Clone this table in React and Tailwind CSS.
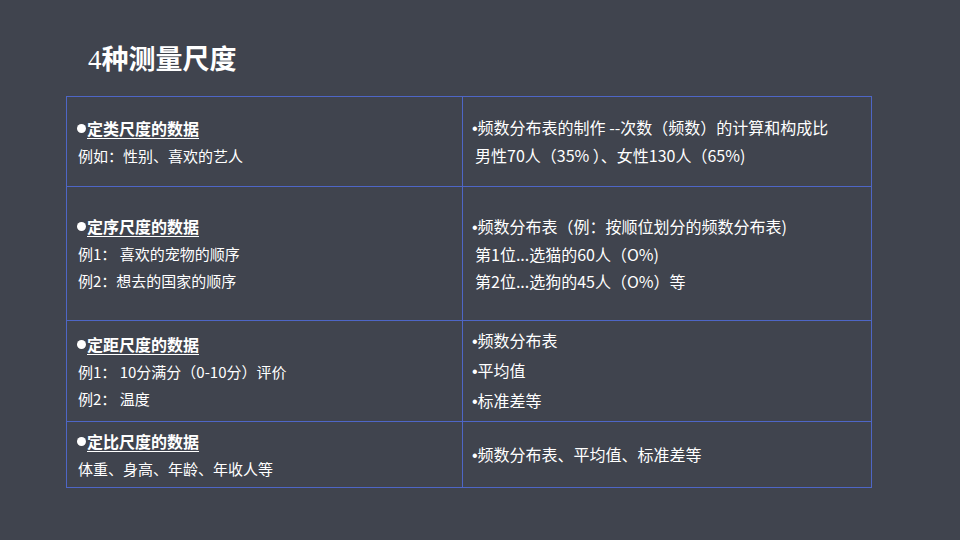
import React from "react";

const rows = [
  {
    h: "h-[90px]",
    title: "定类尺度的数据",
    left: ["例如：性别、喜欢的艺人"],
    right: ["频数分布表的制作 --次数（频数）的计算和构成比", "男性70人（35% ）、女性130人（65%)"],
    dots: [true, false],
    lead: "leading-[27px]",
  },
  {
    h: "h-[134px]",
    title: "定序尺度的数据",
    left: ["例1： 喜欢的宠物的顺序", "例2：想去的国家的顺序"],
    right: ["频数分布表（例：按顺位划分的频数分布表)", "第1位...选猫的60人（O%)", "第2位...选狗的45人（O%）等"],
    dots: [true, false, false],
    lead: "leading-[27px]",
  },
  {
    h: "h-[101px]",
    title: "定距尺度的数据",
    left: ["例1： 10分满分（0-10分）评价", "例2： 温度"],
    right: ["频数分布表", "平均值", "标准差等"],
    dots: [true, true, true],
    lead: "leading-[28px]",
  },
  {
    h: "h-[66px]",
    title: "定比尺度的数据",
    left: ["体重、身高、年龄、年收人等"],
    right: ["频数分布表、平均值、标准差等"],
    dots: [true],
    lead: "leading-[27px]",
  },
];

export default function App() {
  return (
    <div className="w-[960px] h-[540px] bg-[#40444e] text-white font-['Noto_Sans_CJK_SC',sans-serif] overflow-hidden">
      <div className="h-[96px] pl-[88px] pt-[40px]">
        <h1 className="text-[27px] leading-[36px] font-bold">
          <span className="font-['Liberation_Serif',serif] font-normal">4</span>种测量尺度
        </h1>
      </div>
      <table className="ml-[66px] w-[805px] border-collapse table-fixed">
        <colgroup>
          <col className="w-[396px]" />
          <col className="w-[409px]" />
        </colgroup>
        <tbody>
          {rows.map((r) => (
            <tr key={r.title} className={r.h}>
              <td className="border border-[#4e66c6] pl-[10px] align-middle">
                <div className="flex items-center text-[16px] leading-[27px] font-bold">
                  <span className="inline-block w-[9px] h-[9px] rounded-full bg-white mr-[1px]" />
                  <span className="underline underline-offset-[3px]">{r.title}</span>
                </div>
                {r.left.map((t) => (
                  <div key={t} className="text-[15px] leading-[27px] pl-[1px]">
                    {t}
                  </div>
                ))}
              </td>
              <td className="border border-[#4e66c6] pl-[9px] align-middle">
                {r.right.map((t, i) => (
                  <div key={t} className={`text-[16px] ${r.lead} ${r.dots[i] ? "" : "pl-[3px]"}`}>
                    {r.dots[i] && <span className="font-['Liberation_Sans',sans-serif]">•</span>}
                    {t}
                  </div>
                ))}
              </td>
            </tr>
          ))}
        </tbody>
      </table>
    </div>
  );
}
